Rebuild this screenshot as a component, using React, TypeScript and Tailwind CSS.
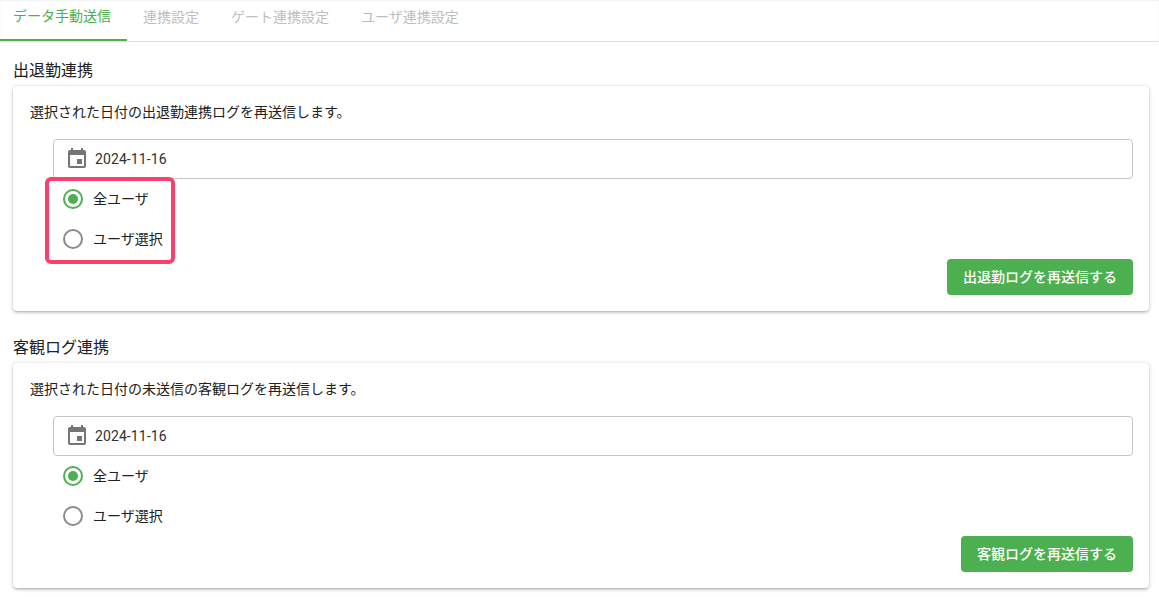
import React from "react";

const font = "[font-family:Roboto,'Noto_Sans_CJK_JP',sans-serif]";

const tabs = ["データ手動送信", "連携設定", "ゲート連携設定", "ユーザ連携設定"];

const CalendarIcon = () => (
  <svg viewBox="0 0 24 24" className="w-6 h-6 fill-[#757575] shrink-0">
    <path d="M17 12h-5v5h5v-5zM16 1v2H8V1H6v2H5c-1.11 0-1.99.9-1.99 2L3 19c0 1.1.89 2 2 2h14c1.1 0 2-.9 2-2V5c0-1.1-.9-2-2-2h-1V1h-2zm3 18H5V8h14v11z" />
  </svg>
);

const Radio = ({ checked, label }: { checked?: boolean; label: string }) => (
  <div className="h-10 flex items-center">
    <div className={`w-5 h-5 rounded-full border-2 flex items-center justify-center ${checked ? "border-[#4caf50]" : "border-[#8a8a8a]"}`}>
      {checked && <div className="w-2.5 h-2.5 rounded-full bg-[#4caf50]"></div>}
    </div>
    <span className="ml-[10px] text-sm text-[#212121]">{label}</span>
  </div>
);

const Section = ({ title, message, button, highlight }: { title: string; message: string; button: string; highlight?: boolean }) => (
  <section className="mb-2">
    <h2 className="h-[44px] pt-[17px] text-base leading-6 text-[#212121]">{title}</h2>
    <div className="bg-white rounded shadow-[0_2px_3px_-1px_rgba(0,0,0,0.25),0_1px_5px_0_rgba(0,0,0,0.14),0_0_2px_0_rgba(0,0,0,0.1)] pt-4 pr-4 pb-4 pl-[17px] h-[225px]">
      <p className="text-sm leading-5 text-[#212121]">{message}</p>
      <div className="ml-[23px] mt-[17px] relative">
        <div className="h-10 border border-[#c4c4c4] rounded flex items-center pl-[11px]">
          <CalendarIcon />
          <span className="ml-[6px] text-sm tracking-[0.1px] text-[#303030]">2024-11-16</span>
        </div>
        <div className="pl-[10px]">
          <Radio checked label="全ユーザ" />
          <Radio label="ユーザ選択" />
        </div>
        {highlight && (
          <div className="absolute left-[-8px] top-[38px] w-[130px] h-[87px] border-4 border-[#f8406c] rounded-md"></div>
        )}
      </div>
      <div className="flex justify-end">
        <button className="h-9 px-4 rounded bg-[#4caf50] text-white text-sm font-medium">{button}</button>
      </div>
    </div>
  </section>
);

export default function App() {
  return (
    <div className={`${font} min-h-[608px] bg-white`}>
      <div className="h-[42px] border-b border-[#e0e0e0] flex shadow-[inset_0_1px_2px_rgba(0,0,0,0.06)]">
        {tabs.map((tab, index) => (
          <div
            key={tab}
            className={`h-[41px] pb-[7px] flex items-center text-sm ${index === 0 ? "w-[127px] pl-[13px] text-[#4caf50] border-b-2 border-[#4caf50]" : "px-4 text-[#bdbdbd]"}`}
          >
            {tab}
          </div>
        ))}
      </div>
      <div className="mx-[13px] w-[1136px]">
        <Section
          title="出退勤連携"
          message="選択された日付の出退勤連携ログを再送信します。"
          button="出退勤ログを再送信する"
          highlight
        />
        <Section
          title="客観ログ連携"
          message="選択された日付の未送信の客観ログを再送信します。"
          button="客観ログを再送信する"
        />
      </div>
    </div>
  );
}
